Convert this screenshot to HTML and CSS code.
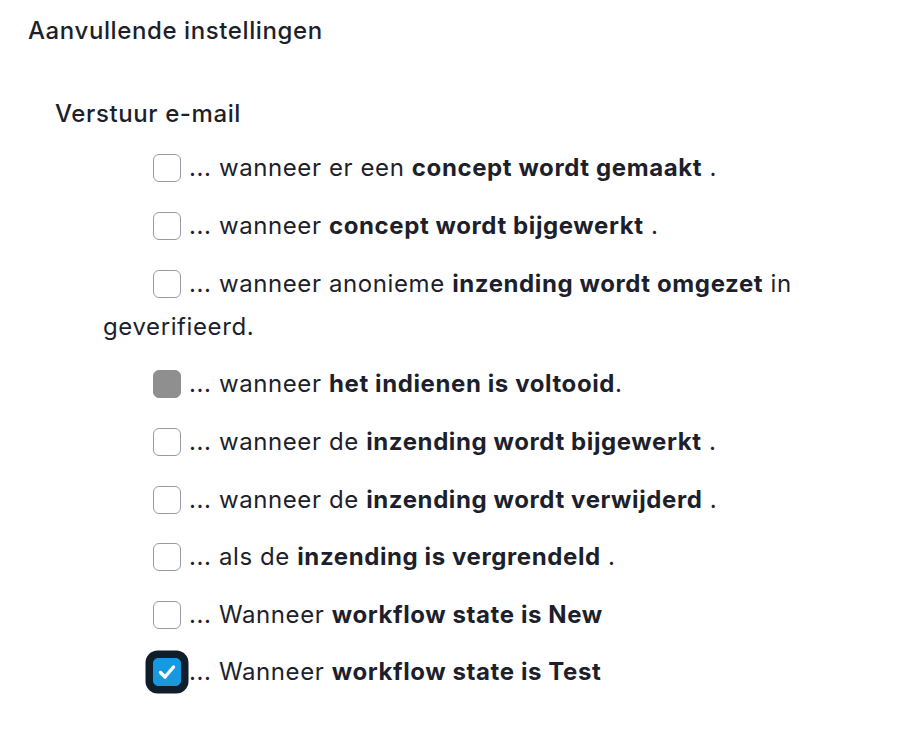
FILE: index.html
```html
<!DOCTYPE html>
<html lang="nl">
<head>
<meta charset="utf-8">
<title>Aanvullende instellingen</title>
<link rel="stylesheet" href="styles.css">
</head>
<body>
<section class="settings">
  <h2 class="settings-title">Aanvullende instellingen</h2>
  <div class="group">
    <h3 class="group-title">Verstuur e-mail</h3>
    <div class="options">
      <p class="option"><span class="cb"></span>... wanneer er een <b>concept wordt gemaakt</b> .</p>
      <p class="option"><span class="cb"></span>... wanneer <b>concept wordt bijgewerkt</b> .</p>
      <p class="option"><span class="cb"></span>... wanneer anonieme <b>inzending wordt omgezet</b> in geverifieerd.</p>
      <p class="option"><span class="cb cb-disabled"></span>... wanneer <b>het indienen is voltooid</b>.</p>
      <p class="option"><span class="cb"></span>... wanneer de <b>inzending wordt bijgewerkt</b> .</p>
      <p class="option"><span class="cb"></span>... wanneer de <b>inzending wordt verwijderd</b> .</p>
      <p class="option"><span class="cb"></span>... als de <b>inzending is vergrendeld</b> .</p>
      <p class="option"><span class="cb"></span>... Wanneer <b>workflow state is New</b></p>
      <p class="option"><span class="cb cb-checked"><svg viewBox="0 0 28 28" width="28" height="28"><polyline points="7.5,14.5 12,19 20.5,9" fill="none" stroke="#fff" stroke-width="3.4" stroke-linecap="round" stroke-linejoin="round"/></svg></span>... Wanneer <b>workflow state is Test</b></p>
    </div>
  </div>
</section>
</body>
</html>
```

FILE: styles.css
```css
html, body {
  margin: 0;
  padding: 0;
  background: #ffffff;
}
body {
  font-family: Inter, "Noto Sans", sans-serif;
  font-size: 24px;
  line-height: 43.2px;
  letter-spacing: 0.6px;
  color: #1d1f2c;
}
.settings {
  padding: 9.4px 0 0 28px;
}
.settings-title {
  margin: 0;
  font-size: 24px;
  font-weight: 500;
  line-height: 43.2px;
}
.group {
  padding: 39.8px 0 0 27px;
}
.group-title {
  margin: 0 0 10.8px;
  font-size: 24px;
  font-weight: 500;
  line-height: 43.2px;
}
.options {
  padding-left: 48px;
}
.option {
  margin: 0 0 14.4px;
  text-indent: 50px;
}
.option b {
  font-weight: 700;
}
.cb {
  display: inline-block;
  box-sizing: border-box;
  width: 28px;
  height: 28px;
  margin-right: 8px;
  border: 1px solid #9a9aa5;
  border-radius: 6px;
  background: #fff;
  vertical-align: -6px;
  text-indent: 0;
}
.cb-disabled {
  background: #8f8f8f;
  border-color: #8f8f8f;
}
.cb-checked {
  background: #1799e0;
  border-color: #1799e0;
  box-shadow: 0 0 0 7.5px #0f1e2a;
  border-radius: 5px;
}
.cb-checked svg {
  display: block;
  margin: -1px;
}
```
